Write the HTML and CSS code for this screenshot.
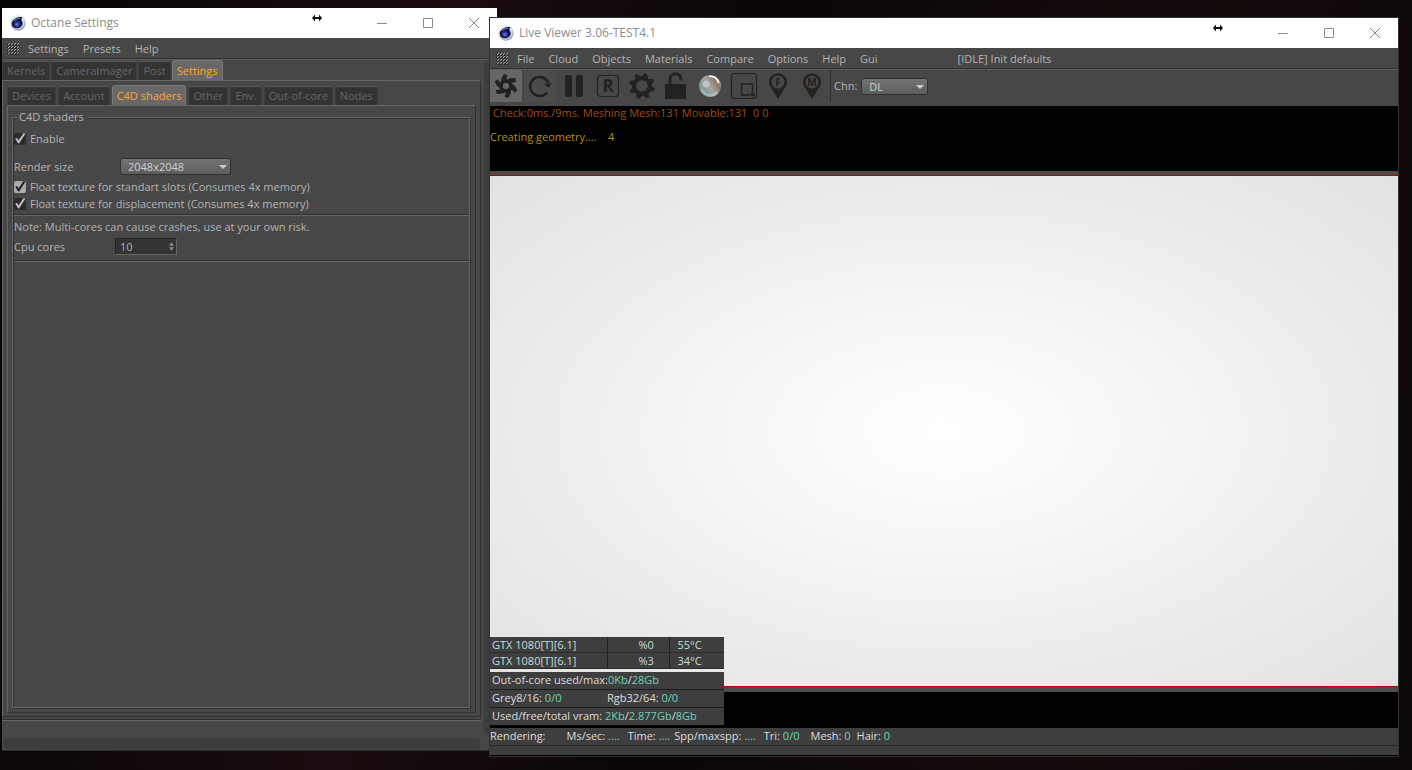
FILE: index.html
```html
<!DOCTYPE html>
<html lang="en">
<head>
  <meta charset="UTF-8">
  <title>Octane Live Viewer</title>
  <link rel="stylesheet" href="styles.css">
</head>
<body>

  <!-- shared symbols -->
  <svg class="defs" width="0" height="0" aria-hidden="true">
    <defs>
      <radialGradient id="ball" cx="45%" cy="60%" r="60%">
        <stop offset="0" stop-color="#6a7ce8"/>
        <stop offset="0.5" stop-color="#2c3a9a"/>
        <stop offset="1" stop-color="#0c1240"/>
      </radialGradient>
      <radialGradient id="shell" cx="40%" cy="35%" r="65%">
        <stop offset="0" stop-color="#ffffff"/>
        <stop offset="0.7" stop-color="#dfe1e8"/>
        <stop offset="1" stop-color="#9a9ea8"/>
      </radialGradient>
      <linearGradient id="glass" x1="0" y1="0.8" x2="1" y2="0.2">
        <stop offset="0" stop-color="#6f9095"/>
        <stop offset="0.5" stop-color="#a8a5a0"/>
        <stop offset="0.8" stop-color="#8f7465"/>
        <stop offset="1" stop-color="#c9c3bd"/>
      </linearGradient>
      <pattern id="dots" width="3" height="3" patternUnits="userSpaceOnUse">
        <rect x="2" width="1" height="1" fill="#a8a8a8"/>
        <rect x="1" y="1" width="1" height="1" fill="#a8a8a8"/>
        <rect y="1" width="1" height="1" fill="#161616"/>
        <rect x="2" y="2" width="1" height="1" fill="#161616"/>
      </pattern>
    </defs>
    <symbol id="logo" viewBox="0 0 16 16">
      <circle cx="8" cy="8" r="7.7" fill="url(#shell)"/>
      <path d="M12.500 2C8 1.500 3 3.500 1.800 7.500c-.8 3.300 1.400 5.800 4.800 5.800 3.200 0 5.600-1.900 6-4.600.2-1.500-.3-2.400-1-3.200-.5-1 0-2.200.9-3.500z" fill="#0c1240"/>
      <circle cx="7.200" cy="8.700" r="3.600" fill="url(#ball)"/>
      <path d="M4 6c1.400-1.800 3.600-2.600 6-2.600" stroke="#8894ee" stroke-width="1" fill="none"/>
    </symbol>
    <symbol id="grip" viewBox="0 0 12 12">
      <rect width="12" height="12" fill="url(#dots)"/>
    </symbol>
    <symbol id="resize" viewBox="0 0 10 8">
      <path d="M0 4l3-3.500v2.500h4V.5L10 4 7 7.500V5H3v2.500z" fill="#111"/>
    </symbol>
    <symbol id="min" viewBox="0 0 10 10"><path d="M0 5.500h10" stroke="#8a8a8a"/></symbol>
    <symbol id="max" viewBox="0 0 10 10"><path d="M.5.5h9v9h-9z" fill="none" stroke="#8a8a8a"/></symbol>
    <symbol id="close" viewBox="0 0 10 10"><path d="M0 0l10 10M10 0L0 10" stroke="#8a8a8a" fill="none"/></symbol>
  </svg>

  <section class="window settings">
    <header class="titlebar">
      <svg class="logo"><use href="#logo"/></svg>
      <h1>Octane Settings</h1>
      <svg class="resize"><use href="#resize"/></svg>
      <div class="win-buttons">
        <button aria-label="Minimize"><svg><use href="#min"/></svg></button>
        <button aria-label="Maximize"><svg><use href="#max"/></svg></button>
        <button aria-label="Close"><svg><use href="#close"/></svg></button>
      </div>
    </header>
    <nav class="menubar">
      <svg class="grip"><use href="#grip"/></svg>
      <button>Settings</button>
      <button>Presets</button>
      <button>Help</button>
    </nav>
    <div class="work">
      <div class="main-col">
        <div class="tabs">
          <button>Kernels</button>
          <button>CameraImager</button>
          <button>Post</button>
          <button class="active">Settings</button>
        </div>
        <div class="pane">
          <div class="tabs sub">
            <button>Devices</button>
            <button>Account</button>
            <button class="active">C4D shaders</button>
            <button>Other</button>
            <button>Env.</button>
            <button>Out-of-core</button>
            <button>Nodes</button>
          </div>
          <div class="pane inner">
            <fieldset>
              <legend>C4D shaders</legend>
              <label class="check enable"><input type="checkbox" checked>Enable</label>
              <div class="field">
                <label for="size">Render size</label>
                <span class="dropdown size"><select id="size"><option>2048x2048</option></select></span>
              </div>
              <label class="check"><input type="checkbox" class="hot" checked>Float texture for standart slots (Consumes 4x memory)</label>
              <label class="check"><input type="checkbox" checked>Float texture for displacement (Consumes 4x memory)</label>
              <hr>
              <p>Note: Multi-cores can cause crashes, use at your own risk.</p>
              <div class="field cores">
                <label for="cores">Cpu cores</label>
                <span class="spin">
                  <input type="number" id="cores" value="10">
                  <svg viewBox="0 0 6 10"><path d="M0 4l3-4 3 4zM0 6h6l-3 4z" fill="#8c8c8c"/></svg>
                </span>
              </div>
              <hr>
            </fieldset>
          </div>
        </div>
      </div>
      <div class="vtrack"></div>
    </div>
    <footer><div class="htrack"></div></footer>
  </section>

  <section class="window viewer">
    <header class="titlebar">
      <svg class="logo"><use href="#logo"/></svg>
      <h1>Live Viewer 3.06-TEST4.1</h1>
      <svg class="resize"><use href="#resize"/></svg>
      <div class="win-buttons">
        <button aria-label="Minimize"><svg><use href="#min"/></svg></button>
        <button aria-label="Maximize"><svg><use href="#max"/></svg></button>
        <button aria-label="Close"><svg><use href="#close"/></svg></button>
      </div>
    </header>
    <nav class="menubar">
      <svg class="grip"><use href="#grip"/></svg>
      <button>File</button>
      <button>Cloud</button>
      <button>Objects</button>
      <button>Materials</button>
      <button>Compare</button>
      <button>Options</button>
      <button>Help</button>
      <button>Gui</button>
      <span class="idle">[IDLE] Init defaults</span>
    </nav>
    <div class="toolbar">
      <button class="on" aria-label="Send scene">
        <svg viewBox="0 0 32 32">
          <g fill="#222">
            <path id="b" d="M11 15.500C10.500 11.500 11 8 14 4l3.600 1.200C16 8 16 9.500 17.500 11.500l-2 1z"/>
            <use href="#b" transform="rotate(60 16 16)"/>
            <use href="#b" transform="rotate(120 16 16)"/>
            <use href="#b" transform="rotate(180 16 16)"/>
            <use href="#b" transform="rotate(240 16 16)"/>
            <use href="#b" transform="rotate(300 16 16)"/>
          </g>
          <circle cx="16" cy="16" r="4.500" fill="none" stroke="#222" stroke-width="2.500"/>
        </svg>
      </button>
      <button class="soft" aria-label="Restart">
        <svg viewBox="0 0 32 32"><path d="M23 22.500A9.500 9.500 0 1 1 24.500 13" fill="none" stroke="#222" stroke-width="2.600"/><path d="M19.500 13.500h8.500l-3.500 4.500z" fill="#222"/></svg>
      </button>
      <button aria-label="Pause">
        <svg viewBox="0 0 32 32"><rect x="7" y="5" width="7" height="22" rx="2" fill="#222"/><rect x="18" y="5" width="7" height="22" rx="2" fill="#222"/></svg>
      </button>
      <button aria-label="Reset">
        <svg viewBox="0 0 32 32"><rect x="5.500" y="5.500" width="21" height="21" rx="3" fill="none" stroke="#222" stroke-width="1.200"/><text x="16" y="22" text-anchor="middle" class="r">R</text></svg>
      </button>
      <button aria-label="Kernel settings">
        <svg viewBox="0 0 32 32">
          <circle cx="16" cy="16" r="7.800" fill="none" stroke="#222" stroke-width="4"/>
          <g fill="#222" transform="rotate(22.500 16 16)">
            <path id="t" d="M12.200 8.500l1.300-5.500h2.500l3.800 5.500z"/>
            <use href="#t" transform="rotate(45 16 16)"/>
            <use href="#t" transform="rotate(90 16 16)"/>
            <use href="#t" transform="rotate(135 16 16)"/>
            <use href="#t" transform="rotate(180 16 16)"/>
            <use href="#t" transform="rotate(225 16 16)"/>
            <use href="#t" transform="rotate(270 16 16)"/>
            <use href="#t" transform="rotate(315 16 16)"/>
          </g>
        </svg>
      </button>
      <button aria-label="Lock resolution">
        <svg viewBox="0 0 32 32"><rect x="5" y="14" width="21" height="15" fill="#222"/><path d="M10 14V9.500a5.500 5.500 0 0 1 11-.5v1.500" fill="none" stroke="#222" stroke-width="3"/></svg>
      </button>
      <button aria-label="Clay mode">
        <svg viewBox="0 0 32 32"><circle cx="16" cy="16" r="11" fill="url(#glass)"/><path d="M7.500 19a9.500 9.500 0 0 0 16 3" fill="none" stroke="#a9cdd2" stroke-width="2" opacity=".7"/><path d="M15 6.500c5-1 8 2 9.500 6.500" fill="none" stroke="#fff" stroke-width="1.500"/><circle cx="12" cy="14" r="3.500" fill="#d5dddd" opacity=".6"/></svg>
      </button>
      <button aria-label="Render region">
        <svg viewBox="0 0 32 32"><rect x="3.500" y="3.500" width="25" height="25" rx="3" fill="none" stroke="#222" stroke-width="1.200"/><path d="M24.500 22v-8H13.500v11H22" fill="none" stroke="#222" stroke-width="1.500"/><circle cx="24.500" cy="24.500" r="2" fill="#222"/></svg>
      </button>
      <button aria-label="Pick focus">
        <svg viewBox="0 0 32 32"><path d="M16 29L9.500 18.500a9 9 0 1 1 13 0z" fill="#222"/><circle cx="16" cy="12" r="6.500" fill="#474747"/><text x="16" y="16" text-anchor="middle" class="pin">F</text></svg>
      </button>
      <button aria-label="Pick material">
        <svg viewBox="0 0 32 32"><path d="M16 29L9.500 18.500a9 9 0 1 1 13 0z" fill="#222"/><circle cx="16" cy="12" r="6.500" fill="#474747"/><text x="16" y="16" text-anchor="middle" class="pin">M</text></svg>
      </button>
      <span class="chn">
        <label for="chn">Chn:</label>
        <span class="dropdown"><select id="chn"><option>DL</option></select></span>
      </span>
    </div>
    <div class="console">
      <pre class="check-line"> Check:0ms./9ms. Meshing Mesh:131 Movable:131  0 0</pre>
      <pre class="geo-line">Creating geometry....    4</pre>
    </div>
    <div class="frame">
      <div class="canvas"></div>
    </div>
    <div class="below">
      <div class="stats">
        <table>
          <tr><td>GTX 1080[T][6.1]</td><td>%0</td><td>55°C</td></tr>
          <tr><td>GTX 1080[T][6.1]</td><td>%3</td><td>34°C</td></tr>
        </table>
        <div class="row">Out-of-core used/max:<b>0Kb</b>/<b>28Gb</b></div>
        <div class="row split"><span>Grey8/16: <b>0/0</b></span><span>Rgb32/64: <b>0/0</b></span></div>
        <div class="row">Used/free/total vram: <b>2Kb</b>/<b>2.877Gb</b>/<b>8Gb</b></div>
      </div>
    </div>
    <div class="status">
      <span class="rendering">Rendering:</span>
      <span>Ms/sec: <b>....</b></span>
      <span>Time: <b>....</b></span>
      <span class="spp">Spp/maxspp: <b>....</b></span>
      <span>Tri: <b>0/0</b></span>
      <span class="mesh">Mesh: <b>0</b></span>
      <span class="hair">Hair: <b>0</b></span>
    </div>
    <div class="progress"></div>
  </section>

</body>
</html>
```
FILE: styles.css
```css
* {
  box-sizing: border-box;
}

body {
  margin: 0;
  height: 100vh;
  position: relative;
  overflow: hidden;
  font-family: "Open Sans", "Noto Sans", sans-serif;
  font-size: 11px;
  line-height: 16px;
  color: #b4b4b4;
  background: linear-gradient(100deg, #060404 0%, #1a0d0f 30%, #0a0606 50%, #150b0c 75%, #0d0808 100%);
}

button, select, input {
  font: inherit;
  color: inherit;
}

button {
  border: none;
  background: none;
  padding: 0;
}

.defs {
  position: absolute;
}

/* windows */
.window {
  position: absolute;
  display: flex;
  flex-direction: column;
  background: #474747;
}

.settings {
  top: 8px;
  left: 2px;
  bottom: 19px;
  width: 495px;
  border-bottom: 1px solid #2c2c2c;
}

.viewer {
  top: 17px;
  left: 489px;
  right: 13px;
  bottom: 13px;
  border: 1px solid #333;
}

.titlebar {
  display: flex;
  align-items: center;
  height: 30px;
  flex: none;
  padding-left: 8px;
  background: #fff;
  color: #8c8c8c;
}

.titlebar h1 {
  margin: 0 auto 0 5px;
  font-size: 12px;
  font-weight: normal;
}

.logo {
  width: 16px;
  height: 16px;
}

.resize {
  width: 10px;
  height: 8px;
  margin: 0 37px 10px 0;
}

.win-buttons {
  display: flex;
}

.win-buttons button {
  width: 46px;
  height: 30px;
}

.win-buttons svg {
  display: block;
  width: 10px;
  height: 10px;
  margin: 0 auto;
}

.menubar {
  display: flex;
  align-items: center;
  gap: 14px;
  height: 22px;
  flex: none;
  padding-left: 5px;
  border-bottom: 1px solid #5e5e5e;
  box-shadow: inset 0 -1px #303030;
}

.viewer .menubar {
  padding-left: 6px;
}

.grip {
  width: 12px;
  height: 12px;
  margin-right: -5px;
}

.idle {
  margin-left: 66px;
}

/* settings window */
.work {
  flex: 1;
  display: flex;
  min-height: 0;
}

.main-col {
  width: 479px;
  display: flex;
  flex-direction: column;
  border-bottom: 1px solid #303030;
}

.tabs {
  display: flex;
  align-items: flex-end;
  gap: 1px;
  height: 20px;
  flex: none;
}

.tabs.sub {
  gap: 2px;
}

.tabs button {
  height: 19px;
  padding: 0 4px;
  border: 1px solid #3e3e3e;
  border-top-color: #585858;
  border-bottom: none;
  border-radius: 3px 3px 0 0;
  background: #333;
  color: #666;
}

.tabs .active {
  height: 20px;
  background: #686868;
  border-color: #777;
  color: #ffa526;
}

.pane {
  flex: 1;
  display: flex;
  flex-direction: column;
  margin-bottom: 2px;
  padding: 4px 4px 3px;
  border: 1px solid #666;
  border-right-color: #303030;
  border-bottom-color: #303030;
}

.pane.inner {
  margin: 0;
  padding: 3px 5px 4px 4px;
}

fieldset {
  flex: 1;
  min-width: 0;
  margin: 0;
  padding: 5px 0 0 1px;
  border: 1px solid #666;
  box-shadow: 1px 1px #303030, inset 1px 1px #303030;
}

legend {
  margin-left: 3px;
  padding: 0 4px 0 2px;
  background: #474747;
}

.check {
  display: flex;
  align-items: center;
  gap: 4px;
  height: 17px;
}

.enable {
  margin-bottom: 11px;
}

.check input {
  appearance: none;
  width: 12px;
  height: 12px;
  margin: 0;
  border-radius: 2px;
  background: #2b2b2b;
}

.check input:checked::after {
  content: "";
  display: block;
  width: 12px;
  height: 12px;
  background: #bbb;
  clip-path: polygon(10% 50%, 25% 45%, 38% 65%, 80% 5%, 95% 10%, 42% 92%, 34% 92%);
}

.check .hot {
  background: #aaa;
}

.check .hot:checked::after {
  background: #222;
}

.field {
  display: flex;
  align-items: center;
  height: 17px;
  margin-bottom: 3px;
}

.field > label {
  width: 106px;
}

.field.cores {
  margin-bottom: 5px;
}

.field.cores > label {
  width: 101px;
}

.dropdown {
  position: relative;
  display: block;
  width: 67px;
}

.dropdown.size {
  width: 111px;
}

.dropdown select {
  appearance: none;
  display: block;
  width: 100%;
  height: 17px;
  padding: 0 7px;
  border: 1px solid #303030;
  border-radius: 3px;
  background: linear-gradient(#747474, #5c5c5c);
  color: #d0d0d0;
}

.dropdown::after {
  content: "";
  position: absolute;
  top: 7px;
  right: 4px;
  border: 4px solid transparent;
  border-top-color: #ccc;
  pointer-events: none;
}

hr {
  margin: 2px 0 3px;
  border: none;
  border-top: 1px solid #303030;
  border-bottom: 1px solid #666;
}

fieldset p {
  margin: 0 0 3px;
}

.spin {
  position: relative;
  display: block;
}

.spin input {
  appearance: textfield;
  display: block;
  width: 62px;
  height: 17px;
  padding: 0 4px;
  border: 1px solid #252525;
  border-right-color: #666;
  border-bottom-color: #666;
  background: #333;
}

.spin input::-webkit-inner-spin-button {
  display: none;
}

.spin svg {
  position: absolute;
  top: 4px;
  right: 3px;
  width: 5px;
  height: 9px;
}

.vtrack {
  width: 12px;
  margin: 1px 0 -16px 3px;
  border-radius: 6px;
  background: #3d3d3d;
}

.settings footer {
  height: 30px;
  flex: none;
  width: 479px;
  padding-top: 17px;
  border-top: 1px solid #666;
}

.htrack {
  height: 11px;
  margin-left: 1px;
  border-radius: 6px;
  background: #3d3d3d;
}

/* live viewer */
.toolbar {
  display: flex;
  gap: 2px;
  height: 36px;
  flex: none;
}

.toolbar button {
  width: 32px;
  height: 32px;
}

.toolbar button svg {
  display: block;
  width: 32px;
  height: 32px;
}

.toolbar .on {
  background: #666;
}

.toolbar .soft {
  background: #4c4c4c;
}

.r {
  font: bold 17px "Open Sans", sans-serif;
  fill: #222;
}

.pin {
  font: bold 10px "Open Sans", sans-serif;
  fill: #222;
}

.chn {
  display: flex;
  align-items: center;
  gap: 4px;
  height: 32px;
  padding-left: 3px;
  border-left: 1px solid #2c2c2c;
}

.console {
  height: 65px;
  flex: none;
  background: #000;
}

.console pre {
  margin: 0;
  font-family: inherit;
  line-height: 14px;
}

.check-line {
  color: #a04f0a;
}

.geo-line {
  padding-top: 10px;
  color: #b8900c;
}

.frame {
  flex: 1;
  display: flex;
  padding: 4px 0 5px;
  background: #4c4c4c;
}

.canvas {
  flex: 1;
  border-top: 1px solid #b80000;
  border-bottom: 1px solid #b80000;
  background: radial-gradient(ellipse farthest-corner, #fff 0%, #fdfdfd 10%, #e0e3df 100%);
}

.below {
  position: relative;
  height: 36px;
  flex: none;
  background: #000;
}

.stats {
  position: absolute;
  left: 0;
  bottom: 3px;
  width: 234px;
  color: #ddd;
}

.stats table {
  width: 100%;
  border-collapse: collapse;
  table-layout: fixed;
  margin-bottom: 3px;
  background: #3e3e3e;
  color: #c4dcd8;
}

.stats td {
  height: 16px;
  padding: 0 2px;
  line-height: 15px;
  border-bottom: 1px solid #2a2a2a;
}

.stats td:first-child {
  width: 117px;
}

.stats td:nth-child(2) {
  width: 62px;
  padding-left: 31px;
  border-left: 1px solid #222;
  border-right: 1px solid #222;
}

.stats td:last-child {
  padding-left: 8px;
}

.row {
  height: 17px;
  padding-left: 2px;
  background: #3e3e3e;
}

.row + .row {
  margin-top: 1px;
  box-shadow: 0 -1px #1c1c1c;
}

.split {
  display: grid;
  grid-template-columns: 115px 1fr;
}

b {
  font-weight: normal;
  color: #6fd3b4;
}

.status {
  display: flex;
  gap: 8px;
  height: 18px;
  flex: none;
  background: #3e3e3e;
  border-bottom: 1px solid #2a2a2a;
  color: #ddd;
}

.rendering {
  margin-right: 13px;
}

.spp {
  margin-left: -4px;
}

.mesh {
  margin-left: 3px;
}

.hair {
  margin-left: -2px;
}

.progress {
  height: 10px;
  flex: none;
  background: #3e3e3e;
  border-bottom: 1px solid #000;
}
```
